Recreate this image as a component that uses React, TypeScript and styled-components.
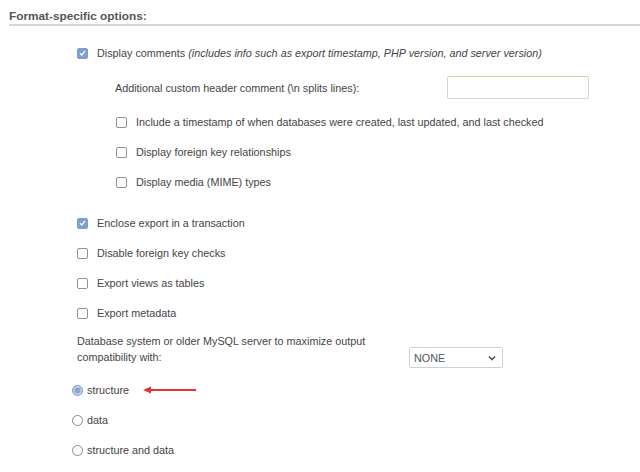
import React from "react";
import styled, { createGlobalStyle } from "styled-components";

const Global = createGlobalStyle`
  html, body { margin: 0; padding: 0; background: #fff; }
  body { font-family: "Liberation Sans", Arial, sans-serif; }
`;

const Page = styled.div`
  width: 640px;
  height: 472px;
  overflow: hidden;
  color: #444;
  font-size: 10.8px;
`;

const Heading = styled.div`
  margin-left: 9px;
  padding: 9px 0 1px;
  border-bottom: 2px solid #d3d7db;
  font-size: 11.8px;
  font-weight: bold;
  color: #555;
`;

const Options = styled.div`
  display: flex;
  flex-direction: column;
  padding: 12px 0 0 77px;
`;

const Row = styled.div<{ $indent?: number; $gapTop?: number; $h?: number }>`
  display: flex;
  align-items: center;
  gap: 9px;
  height: ${(p) => p.$h ?? 30}px;
  margin-left: ${(p) => p.$indent ?? 0}px;
  margin-top: ${(p) => p.$gapTop ?? 0}px;
`;

const Box = styled.span<{ $checked?: boolean }>`
  box-sizing: border-box;
  width: 11px;
  height: 11px;
  flex: none;
  border-radius: 2px;
  display: inline-flex;
  align-items: center;
  justify-content: center;
  border: 1px solid ${(p) => (p.$checked ? "#7f9fce" : "#9a8f88")};
  background: ${(p) => (p.$checked ? "#7f9fce" : "#fff")};
`;

const Em = styled.em`
  font-style: italic;
`;

const FieldLabel = styled.span`
  width: 323px;
  flex: none;
`;

const TextInput = styled.input`
  box-sizing: border-box;
  width: 142px;
  height: 23px;
  border: 1px solid #d8d3cc;
  border-top-color: #d9c9ac;
  border-radius: 2px;
  background: #fff;
  padding: 0 4px;
  font: inherit;
`;

const CompatRow = styled.div`
  display: flex;
  align-items: flex-end;
  margin-top: 5px;
`;

const CompatLabel = styled.span`
  width: 332px;
  line-height: 16px;
  flex: none;
  padding-bottom: 3px;
`;

const Select = styled.div`
  box-sizing: border-box;
  width: 94px;
  height: 21px;
  border: 1px solid #cbd3da;
  border-radius: 2px;
  display: flex;
  align-items: center;
  justify-content: space-between;
  padding: 0 6px 0 4px;
  color: #555;
  font-size: 10.8px;
`;

const Radios = styled.div`
  display: flex;
  flex-direction: column;
  margin: 7px 0 0 -5px;
`;

const Radio = styled.span<{ $checked?: boolean }>`
  box-sizing: border-box;
  width: 11px;
  height: 11px;
  flex: none;
  border-radius: 50%;
  border: 1px solid ${(p) => (p.$checked ? "#7f9fce" : "#8f8884")};
  background: ${(p) => (p.$checked ? "#8aa6d3" : "#fff")};
  box-shadow: ${(p) => (p.$checked ? "inset 0 0 0 1.5px #c9d6ea" : "none")};
`;

const RadioRow = styled.div`
  display: flex;
  align-items: center;
  gap: 4px;
  height: 30px;
`;

const Arrow = styled.svg`
  margin-left: 10px;
  flex: none;
`;

const Check = () => (
  <svg width="7" height="6" viewBox="0 0 7 6">
    <path d="M1 3.2 L2.8 5 L6 1" fill="none" stroke="#fff" strokeWidth="1.3" />
  </svg>
);

const CheckRow: React.FC<{ checked?: boolean; indent?: number; gapTop?: number; children: React.ReactNode }> = ({
  checked,
  indent,
  gapTop,
  children,
}) => (
  <Row $indent={indent} $gapTop={gapTop}>
    <Box $checked={checked}>{checked && <Check />}</Box>
    <span>{children}</span>
  </Row>
);

export default function App() {
  return (
    <Page>
      <Global />
      <Heading>Format-specific options:</Heading>
      <Options>
        <CheckRow checked>
          Display comments <Em>(includes info such as export timestamp, PHP version, and server version)</Em>
        </CheckRow>
        <Row $indent={38} $h={39}>
          <FieldLabel>Additional custom header comment (\n splits lines):</FieldLabel>
          <TextInput type="text" />
        </Row>
        <CheckRow indent={39}>Include a timestamp of when databases were created, last updated, and last checked</CheckRow>
        <CheckRow indent={39}>Display foreign key relationships</CheckRow>
        <CheckRow indent={39}>Display media (MIME) types</CheckRow>
        <CheckRow checked gapTop={11}>
          Enclose export in a transaction
        </CheckRow>
        <CheckRow>Disable foreign key checks</CheckRow>
        <CheckRow>Export views as tables</CheckRow>
        <CheckRow>Export metadata</CheckRow>
        <CompatRow>
          <CompatLabel>
            Database system or older MySQL server to maximize output
            <br />
            compatibility with:
          </CompatLabel>
          <Select>
            <span>NONE</span>
            <svg width="8" height="6" viewBox="0 0 8 6">
              <path d="M1 1.5 L4 4.5 L7 1.5" fill="none" stroke="#555" strokeWidth="1.6" />
            </svg>
          </Select>
        </CompatRow>
        <Radios>
          <RadioRow>
            <Radio $checked />
            <span>structure</span>
            <Arrow width="54" height="8" viewBox="0 0 54 8">
              <path d="M6 4 H53" stroke="#e8332f" strokeWidth="2.2" />
              <path d="M0 4 L8 0.5 L8 7.5 Z" fill="#e8332f" />
            </Arrow>
          </RadioRow>
          <RadioRow>
            <Radio />
            <span>data</span>
          </RadioRow>
          <RadioRow>
            <Radio />
            <span>structure and data</span>
          </RadioRow>
        </Radios>
      </Options>
    </Page>
  );
}
